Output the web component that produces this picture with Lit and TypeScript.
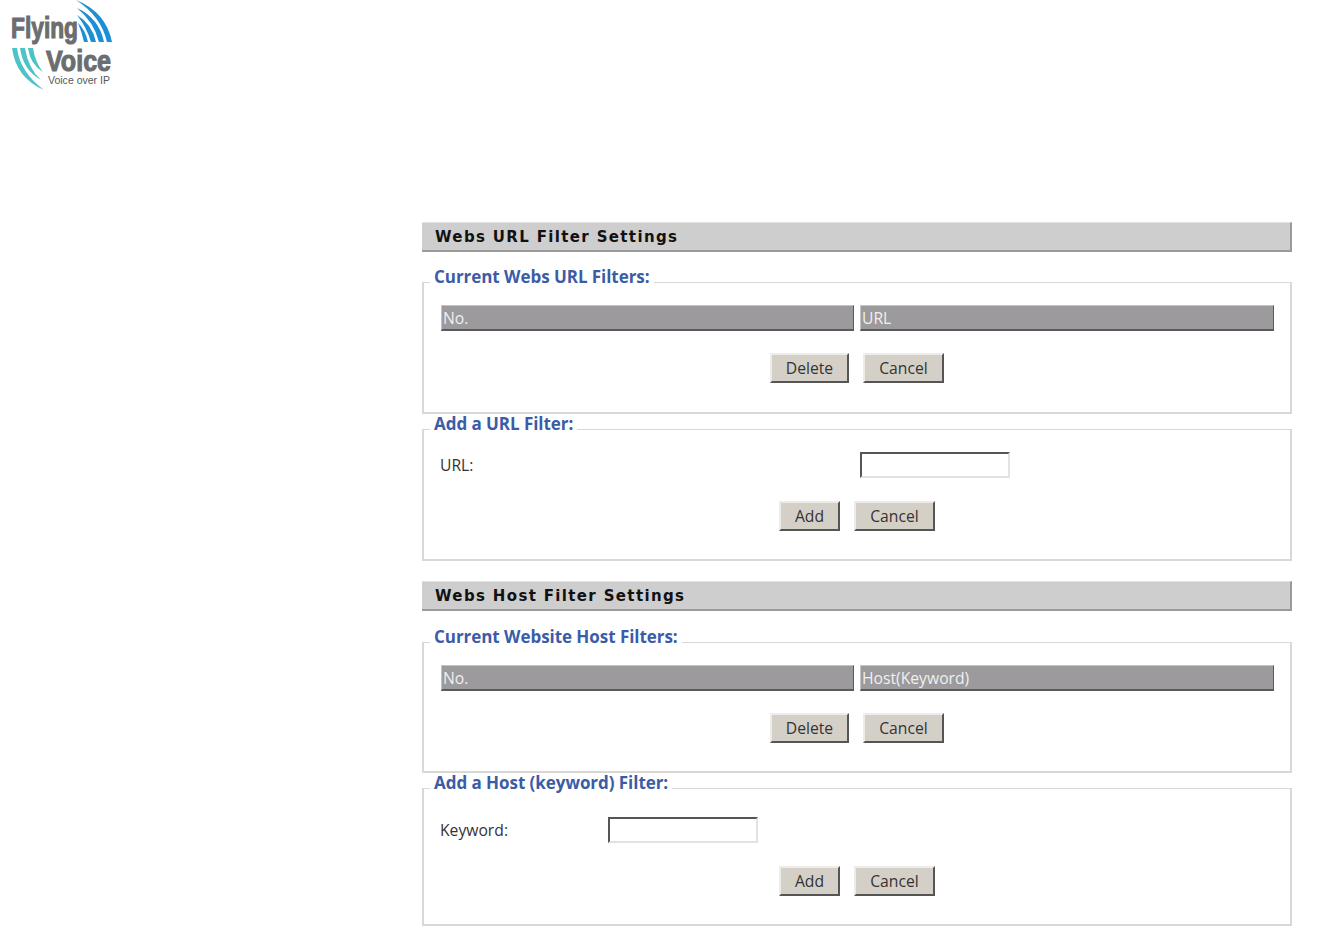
import { LitElement, html, css, svg } from 'lit';
import { customElement } from 'lit/decorators.js';

const logo = svg`
  <svg class="logo" width="120" height="92" viewBox="0 0 120 92">
    <g fill="#1c8fd6">
      <path d="M76 0 Q106 12 112 42 L107 42 Q101 16 76 0Z" />
      <path d="M77 8 Q99 18 104 42 L99 42 Q94 22 77 8Z" />
      <path d="M77 15 Q92 24 96 42 L91 42 Q87 28 77 15Z" />
      <path d="M78 23 Q85 29 88 42 L84 42 Q82 33 78 23Z" />
    </g>
    <g fill="#4cc4c6">
      <path d="M12 48 L17 48 Q20 72 44 90 Q16 78 12 48Z" />
      <path d="M20 48 L25 48 Q28 68 41 80 Q23 70 20 48Z" />
      <path d="M28 48 L33 48 Q35 62 43 72 Q30 64 28 48Z" />
    </g>
    <text x="11" y="38" class="logo-big" textLength="67" lengthAdjust="spacingAndGlyphs">Flying</text>
    <text x="46" y="71" class="logo-big" textLength="65" lengthAdjust="spacingAndGlyphs">Voice</text>
    <text x="48" y="84" class="logo-small" textLength="62" lengthAdjust="spacingAndGlyphs">Voice over IP</text>
  </svg>
`;

@customElement('filter-box')
export class FilterBox extends LitElement {
  static properties = {
    legend: {},
    columns: { type: Array },
    field: {},
    wide: { type: Boolean },
    low: { type: Boolean },
    tall: { type: Boolean },
  };

  declare legend: string;
  declare columns?: string[];
  declare field?: string;
  declare wide: boolean;
  declare low: boolean;
  declare tall: boolean;

  static styles = css`
    :host {
      display: block;
    }

    fieldset {
      margin: 0;
      padding: 8px 16px 28px 17px;
      border: 2px solid #d8d8d8;
      border-width: 1px 2px 2px 2px;
      min-width: 0;
    }

    fieldset.tall {
      padding-bottom: 29px;
    }

    fieldset.low {
      padding-top: 14px;
    }

    legend {
      margin-left: -11px;
      padding: 0 4px 10px;
      line-height: 20px;
      font-size: 17px;
      font-weight: 700;
      color: #3b5ca6;
      font-family: 'Open Sans', 'Noto Sans', sans-serif;
      letter-spacing: -0.05px;
    }

    .heads {
      display: grid;
      grid-template-columns: 413px 414px;
      column-gap: 6px;
    }

    .head {
      height: 26px;
      box-sizing: border-box;
      padding-left: 1px;
      line-height: 24px;
      font-size: 15.7px;
      color: #f0f0f0;
      background: #9c9a9c;
      border-top: 1px solid #c4c4c4;
      border-left: 1px solid #c4c4c4;
      border-right: 1px solid #5a5a5a;
      border-bottom: 2px solid #5a5a5a;
    }

    .field {
      display: flex;
      align-items: center;
      height: 26px;
      margin-left: -1px;
      font-size: 15.7px;
      color: #333;
    }

    .field label {
      width: 168px;
    }

    .field.wide label {
      width: 420px;
    }

    input {
      width: 150px;
      height: 26px;
      box-sizing: border-box;
      margin: 0;
      padding: 0;
      background: #fff;
      border: 2px solid;
      border-color: #555 #e4e2dc #e4e2dc #555;
    }

    .actions {
      display: flex;
      justify-content: center;
      gap: 14px;
      margin-top: 22px;
      padding-right: 1px;
    }

    .field + .actions {
      margin-top: 23px;
    }

    button {
      width: 79px;
      height: 30px;
      box-sizing: border-box;
      padding: 0;
      font: inherit;
      font-size: 15.7px;
      color: #333;
      background: #d4d0c8;
      border: 2px solid;
      border-color: #eeece8 #555 #555 #eeece8;
    }

    button.add {
      width: 61px;
    }

    button.cancel {
      width: 81px;
    }
  `;

  render() {
    const classes = `${this.low ? 'low' : ''} ${this.tall ? 'tall' : ''}`;
    return html`
      <fieldset class=${classes}>
        <legend>${this.legend}</legend>
        ${this.columns
          ? html`
              <div class="heads">
                ${this.columns.map((c) => html`<div class="head">${c}</div>`)}
              </div>
              <div class="actions">
                <button>Delete</button>
                <button class="cancel">Cancel</button>
              </div>
            `
          : html`
              <div class="field ${this.wide ? 'wide' : ''}">
                <label>${this.field}:</label>
                <input type="text" />
              </div>
              <div class="actions">
                <button class="add">Add</button>
                <button class="cancel">Cancel</button>
              </div>
            `}
      </fieldset>
    `;
  }
}

@customElement('app-root')
export class AppRoot extends LitElement {
  static styles = css`
    :host {
      display: block;
      height: 932px;
      overflow: hidden;
      background: #fff;
      font-family: 'Open Sans', 'Noto Sans', sans-serif;
    }

    .logo {
      display: block;
    }

    .logo-big {
      font-family: 'Liberation Sans', sans-serif;
      font-size: 29px;
      font-weight: 700;
      fill: #6b6d70;
      stroke: #6b6d70;
      stroke-width: 1.1;
    }

    .logo-small {
      font-family: 'Liberation Sans', sans-serif;
      font-size: 11px;
      fill: #55595c;
    }

    .content {
      width: 870px;
      margin: 130px 0 0 422px;
    }

    .title {
      height: 30px;
      box-sizing: border-box;
      padding-left: 13px;
      line-height: 28px;
      font-family: 'DejaVu Sans', sans-serif;
      font-size: 15px;
      font-weight: 700;
      letter-spacing: 1.35px;
      color: #111;
      background: #cecece;
      border-top: 1px solid #e2e2e2;
      border-right: 2px solid #9a9a9a;
      border-bottom: 2px solid #9a9a9a;
    }

    .first {
      margin-top: 15px;
    }

    .first.host {
      margin-top: 16px;
    }

    .title.second {
      margin-top: 20px;
    }
  `;

  render() {
    return html`
      ${logo}
      <div class="content">
        <div class="title">Webs URL Filter Settings</div>
        <filter-box
          class="first"
          legend="Current Webs URL Filters:"
          .columns=${['No.', 'URL']}
          tall
        ></filter-box>
        <filter-box legend="Add a URL Filter:" field="URL" wide></filter-box>
        <div class="title second">Webs Host Filter Settings</div>
        <filter-box
          class="first host"
          legend="Current Website Host Filters:"
          .columns=${['No.', 'Host(Keyword)']}
        ></filter-box>
        <filter-box legend="Add a Host (keyword) Filter:" field="Keyword" low></filter-box>
      </div>
    `;
  }
}
